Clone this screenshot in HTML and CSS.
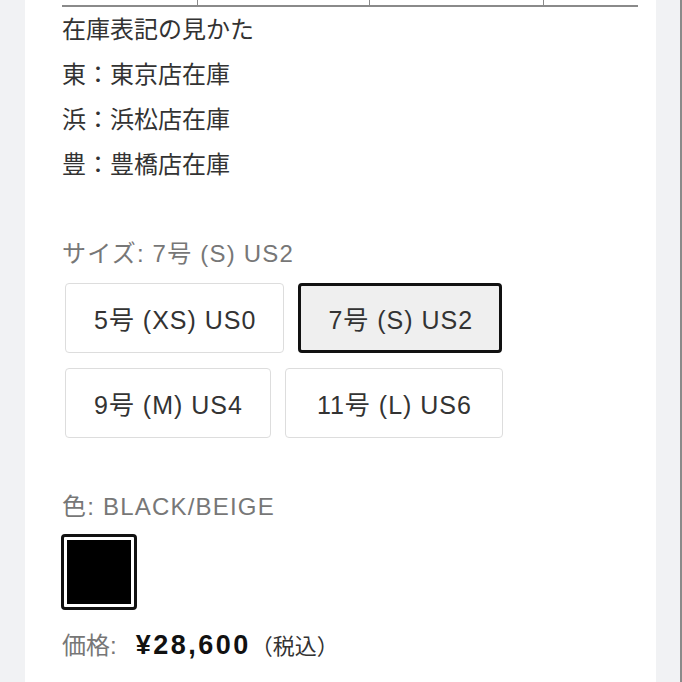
FILE: index.html
```html
<!DOCTYPE html>
<html lang="ja">
<head>
  <meta charset="UTF-8">
  <title>商品詳細</title>
  <link rel="stylesheet" href="styles.css">
</head>
<body>

<div class="page">
  <div class="stock-table">
    <div class="stock-cell"></div>
    <div class="stock-cell"></div>
    <div class="stock-cell"></div>
    <div class="stock-cell"></div>
  </div>

  <div class="stock-note">
    <p>在庫表記の見かた</p>
    <p>東：東京店在庫</p>
    <p>浜：浜松店在庫</p>
    <p>豊：豊橋店在庫</p>
  </div>

  <div class="option-label">サイズ: 7号 (S) US2</div>
  <div class="size-list">
    <button class="size-btn">5号 (XS) US0</button>
    <button class="size-btn selected">7号 (S) US2</button>
    <button class="size-btn">9号 (M) US4</button>
    <button class="size-btn">11号 (L) US6</button>
  </div>

  <div class="option-label color-label">色: BLACK/BEIGE</div>
  <div class="swatch-list">
    <div class="swatch selected"><span class="swatch-color"></span></div>
  </div>

  <div class="price">
    <span class="price-label">価格:</span><span class="price-value">¥28,600</span><span class="price-tax">（税込）</span>
  </div>
</div>

</body>
</html>
```

FILE: styles.css
```css
html, body {
  height: 100%;
}
body {
  margin: 0;
  background-color: #f1f2f4;
  font-family: "Liberation Sans", "Noto Sans CJK JP", sans-serif;
  color: #333;
  box-sizing: border-box;
  border-right: 2px solid #8a8a8a;
  overflow: hidden;
}
.page {
  background-color: white;
  margin-left: 25px;
  width: 631px;
  min-height: 100%;
  padding: 0 18px 0 37px;
  box-sizing: border-box;
}
.stock-table {
  display: flex;
  height: 5px;
  border-bottom: 2px solid #8a8a8a;
}
.stock-cell {
  flex: 0 0 auto;
  border-right: 1px solid #8a8a8a;
}
.stock-cell:nth-child(1) { width: 135px; }
.stock-cell:nth-child(2) { width: 171px; }
.stock-cell:nth-child(3) { width: 173px; }
.stock-cell:nth-child(4) { flex: 1; border-right: none; }
.stock-note p {
  margin: 0;
  font-size: 24px;
  line-height: 45px;
}
.option-label {
  margin-top: 52px;
  font-size: 24px;
  line-height: 30px;
  letter-spacing: 1.2px;
  color: #777;
}
.size-list {
  display: flex;
  flex-wrap: wrap;
  gap: 15px 14px;
  margin: 14px 0 0 3px;
  width: 460px;
}
.size-btn {
  height: 70px;
  padding: 0 27px 0 28px;
  background-color: white;
  border: 1px solid #ddd;
  border-radius: 4px;
  font-family: inherit;
  font-size: 25px;
  letter-spacing: 1px;
  color: #333;
}
.size-btn.selected {
  border: 3px solid #111;
  background-color: #efefef;
  padding: 0 26px 0 27px;
}
.size-btn:nth-child(4) {
  padding: 0 30px 0 31px;
}
.color-label {
  margin-top: 54px;
}
.swatch-list {
  margin-top: 12px;
}
.swatch {
  display: inline-block;
  width: 76px;
  height: 76px;
  box-sizing: border-box;
  border: 3px solid #111;
  border-radius: 4px;
  padding: 3px;
  margin-left: -1px;
}
.swatch-color {
  display: block;
  width: 100%;
  height: 100%;
  background-color: black;
}
.price {
  margin-top: 16px;
  line-height: 30px;
}
.price-label {
  font-size: 24px;
  color: #777;
  margin-right: 19px;
}
.price-value {
  font-size: 27px;
  font-weight: bold;
  letter-spacing: 2.5px;
  color: #111;
}
.price-tax {
  font-size: 22px;
  color: #333;
}
```
